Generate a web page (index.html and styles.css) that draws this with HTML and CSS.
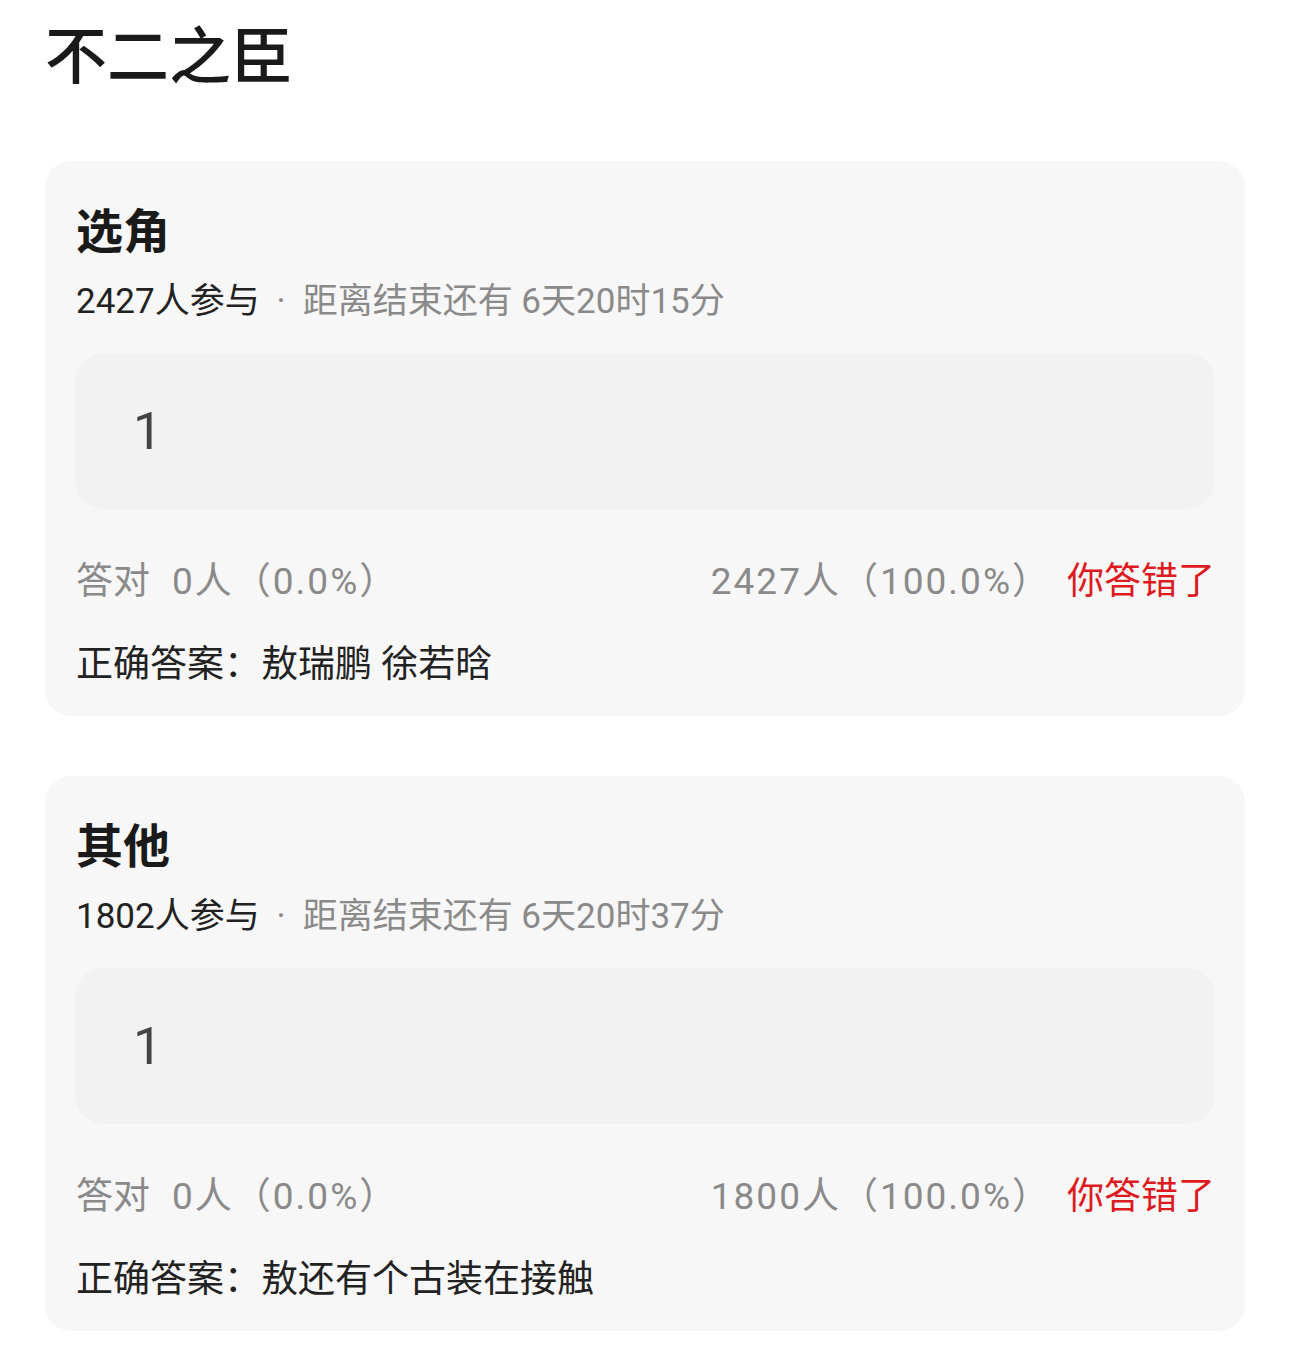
FILE: index.html
```html
<!DOCTYPE html>
<html lang="zh-CN">
<head>
<meta charset="utf-8">
<title>不二之臣</title>
<link rel="stylesheet" href="styles.css">
</head>
<body>
<div class="page">
  <h1 class="title">不二之臣</h1>

  <section class="card">
    <h2 class="card-title">选角</h2>
    <div class="meta"><span class="meta-count">2427人参与</span><span class="meta-rest"><span class="dot">·</span>距离结束还有 6天20时15分</span></div>
    <div class="answer-box">1</div>
    <div class="stats">
      <div class="stats-left"><span>答对</span><span class="num gap">0人（0.0%）</span></div>
      <div class="stats-right"><span class="num">2427人（100.0%）</span><span class="wrong">你答错了</span></div>
    </div>
    <div class="correct">正确答案：敖瑞鹏 徐若晗</div>
  </section>

  <section class="card">
    <h2 class="card-title">其他</h2>
    <div class="meta"><span class="meta-count">1802人参与</span><span class="meta-rest"><span class="dot">·</span>距离结束还有 6天20时37分</span></div>
    <div class="answer-box">1</div>
    <div class="stats">
      <div class="stats-left"><span>答对</span><span class="num gap">0人（0.0%）</span></div>
      <div class="stats-right"><span class="num">1800人（100.0%）</span><span class="wrong">你答错了</span></div>
    </div>
    <div class="correct">正确答案：敖还有个古装在接触</div>
  </section>
</div>
</body>
</html>
```

FILE: styles.css
```css
* { box-sizing: border-box; }
html, body { margin: 0; padding: 0; background: #ffffff; }
body {
  font-family: Roboto, "Noto Sans CJK SC", "Noto Sans", sans-serif;
  color: #1f1f1f;
}
.page {
  padding: 0 45px;
  display: flex;
  flex-direction: column;
  gap: 60px;
}
.title {
  margin: -3px 0 -6px 0;
  font-size: 62px;
  line-height: 110px;
  font-weight: 500;
  color: #1a1a1a;
  font-family: "Noto Sans CJK SC", sans-serif;
}
.card {
  background: #f7f7f7;
  border-radius: 26px;
  padding: 30px 30px 15px 31px;
  display: flex;
  flex-direction: column;
}
.card-title {
  margin: 0;
  font-size: 47px;
  line-height: 74px;
  font-weight: 700;
  color: #1a1a1a;
  font-family: "Noto Sans CJK SC", sans-serif;
}
.meta {
  font-size: 35px;
  line-height: 74px;
  white-space: pre;
}
.meta-count { color: #222222; }
.meta-rest { color: #8a8a8a; }
.dot { display: inline-block; width: 43px; text-align: center; }
.answer-box {
  margin: 14px 0 0 -1px;
  height: 156px;
  background: #f2f2f2;
  border-radius: 28px;
  padding-left: 58px;
  display: flex;
  align-items: center;
  font-size: 52px;
  color: #444444;
}
.stats {
  margin-top: 32px;
  display: flex;
  justify-content: space-between;
  font-size: 37px;
  line-height: 82px;
  color: #8a8a8a;
}
.num { letter-spacing: 2px; }
.gap { margin-left: 22px; }
.stats-right { display: flex; }
.wrong {
  color: #dd1a1f;
  margin-left: 16px;
  font-size: 37px;
}
.correct {
  font-size: 37px;
  line-height: 80px;
  padding-top: 2px;
  color: #222222;
}
.card { padding-bottom: 11px; }
```
